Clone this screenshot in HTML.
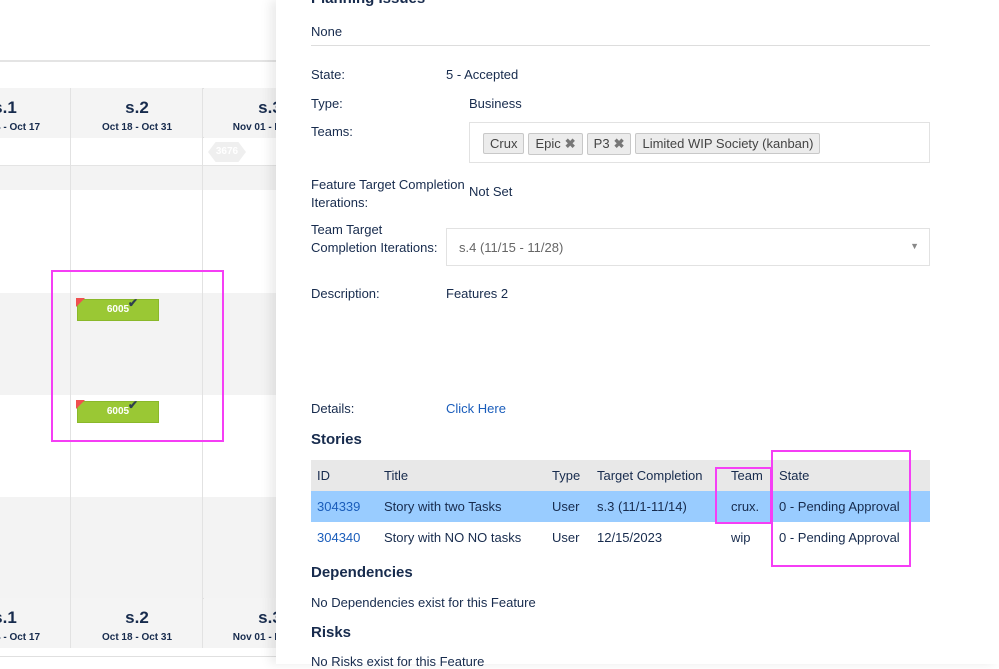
<!DOCTYPE html>
<html><head><style>
*{margin:0;padding:0;box-sizing:border-box}
body{width:999px;height:664px;overflow:hidden;background:#fff;font-family:"Liberation Sans",Arial,sans-serif;position:relative;color:#172b4d}
.a{position:absolute}
.hd{background:#f4f4f4;text-align:center;color:#172b4d;font-weight:bold}
.hd b{display:block;font-size:17px;margin-top:10px}
.hd i{display:block;font-style:normal;font-size:10px;margin-top:4px}
.vl{position:absolute;width:1px;background:#e2e2e2}
.card{position:absolute;width:82px;height:22px;background:#9ac834;border:1px solid #8ab82a;color:#fff;font-size:10px;font-weight:bold;text-align:center;line-height:20px}
.card:before{content:"";position:absolute;left:-2px;top:-2px;border-top:9px solid #f05050;border-right:9px solid transparent}
.card span{position:absolute;left:50px;top:-7px;color:#2f3f4f;font-size:12px}
.p{font-size:13px;color:#172b4d}
.tag{display:inline-block;border:1px solid #c8c8c8;background:#ececec;border-radius:2px;padding:2px 6px;margin-right:4px;font-size:13px;color:#444}
.tag em{font-style:normal;color:#777;font-weight:bold;margin-left:4px}
h3{font-size:15px;font-weight:bold;position:absolute;color:#172b4d}
td{font-size:13px;padding:0 6px;height:31px;white-space:nowrap}
</style></head><body>
<div class="a" style="left:0;top:60px;width:280px;height:2px;background:#e4e4e4"></div>
<div class="a hd" style="left:0;top:88px;width:280px;height:50px;border-top:1px solid #e0e0e0;border-bottom:1px solid #e0e0e0"></div>
<div class="a hd" style="left:-60px;top:88px;width:130px;height:50px"><b>s.1</b><i>Oct 04 - Oct 17</i></div>
<div class="a hd" style="left:71px;top:88px;width:132px;height:50px"><b>s.2</b><i>Oct 18 - Oct 31</i></div>
<div class="a hd" style="left:204px;top:88px;width:132px;height:50px"><b>s.3</b><i>Nov 01 - Nov 14</i></div>
<div class="a" style="left:0;top:165px;width:280px;height:25px;background:#f3f3f3;border-top:1px solid #e4e4e4"></div>
<div class="a" style="left:0;top:293px;width:280px;height:102px;background:#f3f3f3"></div>
<div class="a" style="left:0;top:497px;width:280px;height:101px;background:#f3f3f3"></div>
<div class="a hd" style="left:0;top:598px;width:280px;height:50px;border-top:1px solid #e0e0e0"></div>
<div class="a hd" style="left:-60px;top:598px;width:130px;height:50px"><b>s.1</b><i>Oct 04 - Oct 17</i></div>
<div class="a hd" style="left:71px;top:598px;width:132px;height:50px"><b>s.2</b><i>Oct 18 - Oct 31</i></div>
<div class="a hd" style="left:204px;top:598px;width:132px;height:50px"><b>s.3</b><i>Nov 01 - Nov 14</i></div>
<div class="a" style="left:0;top:656px;width:280px;height:1px;background:#e0e0e0"></div>
<div class="vl" style="left:70px;top:88px;height:560px"></div>
<div class="vl" style="left:202px;top:88px;height:560px"></div>
<div class="a" style="left:208px;top:142px;width:38px;height:20px;background:#efefef;clip-path:polygon(20% 0,80% 0,100% 50%,80% 100%,20% 100%,0 50%);color:#fff;font-size:10px;font-weight:bold;text-align:center;line-height:20px">3676</div>
<div class="card" style="left:77px;top:299px">6005<span>✔</span></div>
<div class="card" style="left:77px;top:401px">6005<span>✔</span></div>
<div class="a" style="left:51px;top:270px;width:173px;height:172px;border:2px solid #f53ef5"></div>

<div class="a" style="left:276px;top:0;width:723px;height:664px;background:#fff;box-shadow:-6px 0 10px rgba(0,0,0,.08)"></div>
<h3 style="left:311px;top:-10px">Planning Issues</h3>
<div class="a p" style="left:311px;top:24px">None</div>
<div class="a" style="left:311px;top:45px;width:619px;height:1px;background:#ddd"></div>
<div class="a p" style="left:311px;top:67px">State:</div><div class="a p" style="left:446px;top:67px">5 - Accepted</div>
<div class="a p" style="left:311px;top:96px">Type:</div><div class="a p" style="left:469px;top:96px">Business</div>
<div class="a p" style="left:311px;top:124px">Teams:</div>
<div class="a" style="left:469px;top:122px;width:461px;height:41px;border:1px solid #e2e2e2;padding:10px 0 0 13px;white-space:nowrap"><span class="tag">Crux</span><span class="tag">Epic<em>✖</em></span><span class="tag">P3<em>✖</em></span><span class="tag">Limited WIP Society (kanban)</span></div>
<div class="a p" style="left:311px;top:176px;line-height:18px">Feature Target Completion<br>Iterations:</div>
<div class="a p" style="left:469px;top:184px">Not Set</div>
<div class="a p" style="left:311px;top:221px;line-height:18px">Team Target<br>Completion Iterations:</div>
<div class="a" style="left:446px;top:228px;width:484px;height:38px;border:1px solid #e2e2e2;font-size:13px;color:#666;padding:11px 0 0 12px">s.4 (11/15 - 11/28)<span style="position:absolute;right:10px;top:12px;font-size:9px;color:#888">▼</span></div>
<div class="a p" style="left:311px;top:286px">Description:</div><div class="a p" style="left:446px;top:286px">Features 2</div>
<div class="a p" style="left:311px;top:401px">Details:</div><div class="a p" style="left:446px;top:401px;color:#1a5dbb">Click Here</div>
<h3 style="left:311px;top:431px">Stories</h3>
<table class="a" style="left:311px;top:460px;width:619px;border-collapse:collapse">
<tr style="background:#e8e8e8"><td style="width:67px">ID</td><td style="width:168px">Title</td><td style="width:45px">Type</td><td style="width:134px">Target Completion</td><td style="width:48px">Team</td><td>State</td></tr>
<tr style="background:#99ccff"><td style="color:#1a5dbb">304339</td><td>Story with two Tasks</td><td>User</td><td>s.3 (11/1-11/14)</td><td>crux.</td><td>0 - Pending Approval</td></tr>
<tr><td style="color:#1a5dbb">304340</td><td>Story with NO NO tasks</td><td>User</td><td>12/15/2023</td><td>wip</td><td>0 - Pending Approval</td></tr>
</table>
<div class="a" style="left:715px;top:467px;width:57px;height:57px;border:2px solid #f53ef5"></div>
<div class="a" style="left:771px;top:450px;width:140px;height:117px;border:2px solid #f53ef5"></div>
<h3 style="left:311px;top:564px">Dependencies</h3>
<div class="a p" style="left:311px;top:595px">No Dependencies exist for this Feature</div>
<h3 style="left:311px;top:624px">Risks</h3>
<div class="a p" style="left:311px;top:654px">No Risks exist for this Feature</div>
</body></html>
